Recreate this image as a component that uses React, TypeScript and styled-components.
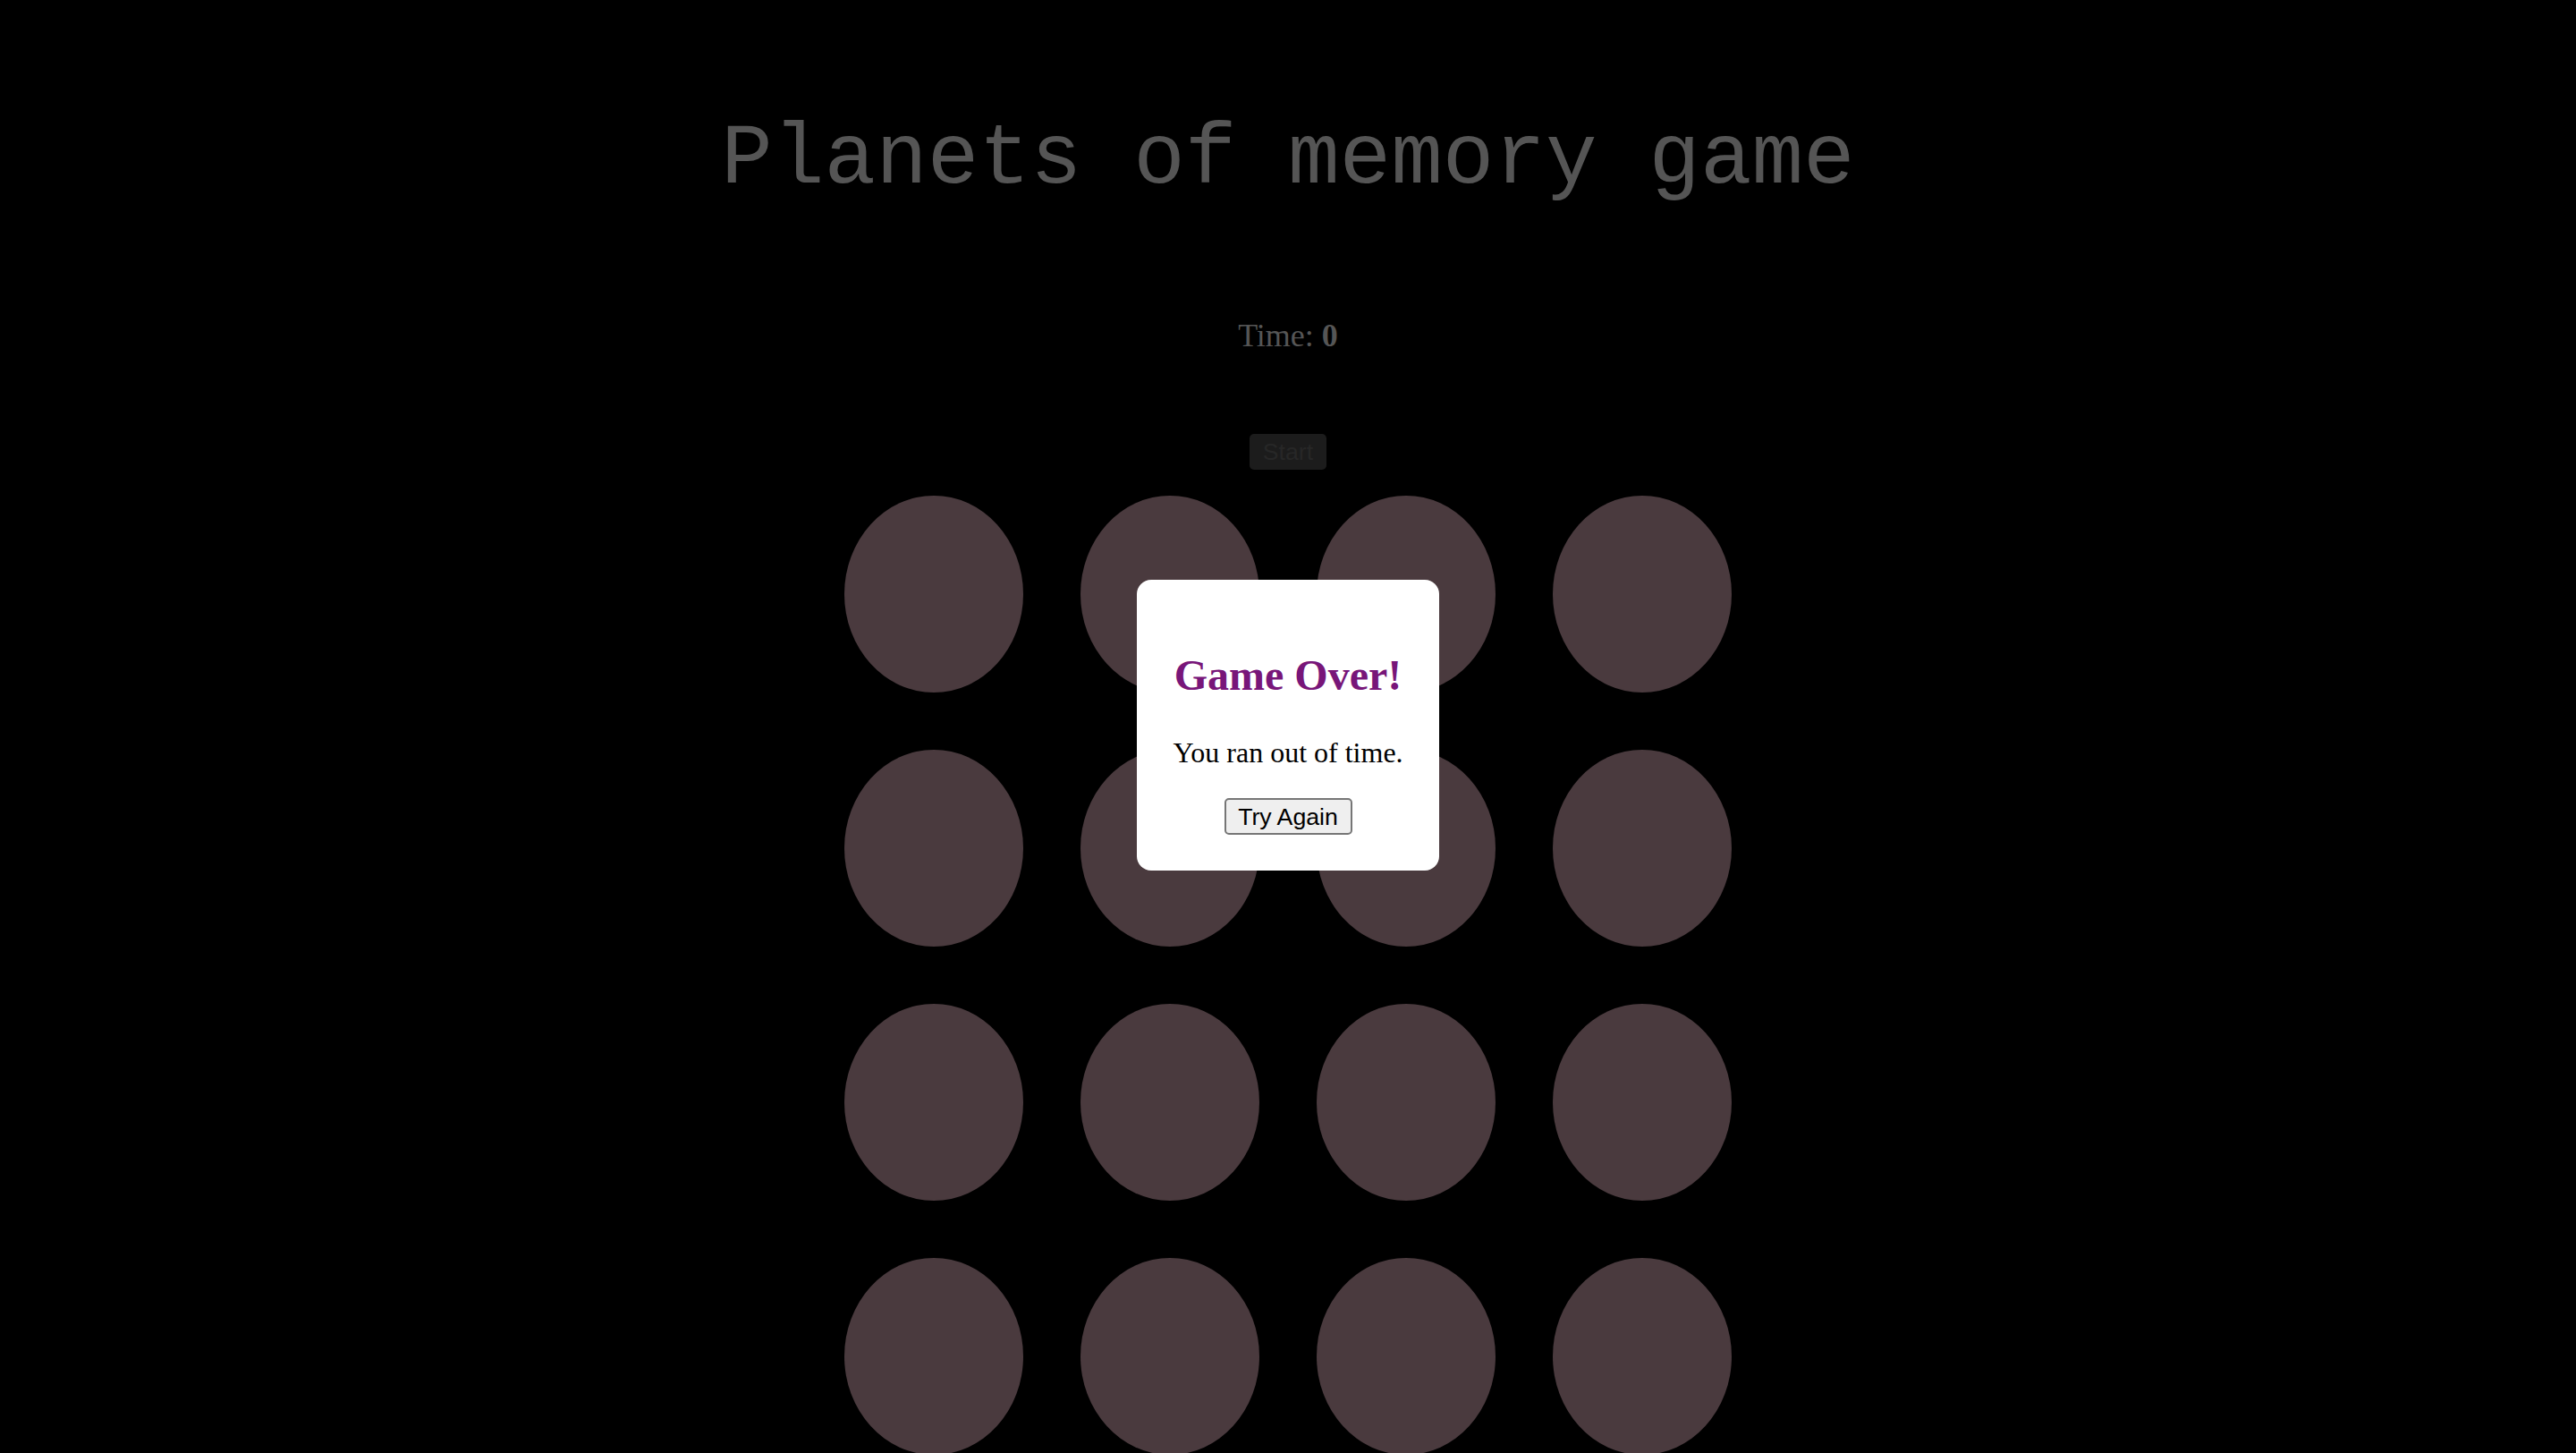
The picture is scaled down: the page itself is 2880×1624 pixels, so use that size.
import React from "react";
import styled, { createGlobalStyle } from "styled-components";

const GlobalStyle = createGlobalStyle`
  html, body {
    margin: 0;
    padding: 0;
    background: #000;
  }
  body {
    font-family: "Liberation Serif", "Times New Roman", serif;
    overflow: hidden;
  }
`;

const Page = styled.main`
  display: flex;
  flex-direction: column;
  align-items: center;
  min-height: 100vh;
  background: #000;
`;

const Title = styled.h1`
  margin: 124px 0 0;
  font-family: "Liberation Mono", "Courier New", monospace;
  font-size: 96px;
  font-weight: normal;
  line-height: 109px;
  color: #555555;
`;

const Timer = styled.div`
  margin-top: 122px;
  font-family: "Liberation Serif", "Times New Roman", serif;
  font-size: 36px;
  line-height: 41px;
  color: #555555;

  strong {
    font-weight: bold;
  }
`;

const StartButton = styled.button`
  margin-top: 89px;
  width: 86px;
  height: 40px;
  padding: 0;
  border: none;
  border-radius: 5px;
  background: #1c1c1c;
  color: #272727;
  font-family: "Liberation Sans", Arial, sans-serif;
  font-size: 26.67px;
  line-height: 40px;
  cursor: default;
`;

const Board = styled.div`
  margin-top: 29px;
  display: grid;
  grid-template-columns: repeat(4, 200px);
  grid-auto-rows: 220px;
  column-gap: 64px;
  row-gap: 64px;
`;

const Card = styled.div`
  width: 200px;
  height: 220px;
  border-radius: 50%;
  background: #4a3a3e;
`;

const Overlay = styled.div`
  position: fixed;
  inset: 0;
  display: flex;
  align-items: center;
  justify-content: center;
  padding-bottom: 3px;
`;

const Modal = styled.div`
  box-sizing: border-box;
  width: 338px;
  padding: 40px 0;
  background: #ffffff;
  border-radius: 16px;
  display: flex;
  flex-direction: column;
  align-items: center;
  text-align: center;
`;

const ModalTitle = styled.h2`
  margin: 40px 0 0;
  font-family: "Liberation Serif", "Times New Roman", serif;
  font-size: 48px;
  font-weight: bold;
  line-height: 53px;
  color: #781679;
`;

const ModalText = styled.p`
  margin: 42px 0 0;
  font-family: "Liberation Serif", "Times New Roman", serif;
  font-size: 32px;
  line-height: 36px;
  color: #000;
`;

const RetryButton = styled.button`
  margin-top: 33px;
  box-sizing: border-box;
  width: 143px;
  height: 41px;
  padding: 0 12px;
  border: 2px solid #767676;
  border-radius: 5px;
  background: #efefef;
  color: #000;
  font-family: "Liberation Sans", Arial, sans-serif;
  font-size: 26.67px;
  line-height: 36px;
  cursor: pointer;
`;

const cards = Array.from({ length: 16 }, (_, i) => i);

export default function App() {
  return (
    <>
      <GlobalStyle />
      <Page>
        <Title>Planets of memory game</Title>
        <Timer>
          Time: <strong>0</strong>
        </Timer>
        <StartButton disabled>Start</StartButton>
        <Board>
          {cards.map((c) => (
            <Card key={c} />
          ))}
        </Board>
      </Page>
      <Overlay>
        <Modal>
          <ModalTitle>Game Over!</ModalTitle>
          <ModalText>You ran out of time.</ModalText>
          <RetryButton>Try Again</RetryButton>
        </Modal>
      </Overlay>
    </>
  );
}
